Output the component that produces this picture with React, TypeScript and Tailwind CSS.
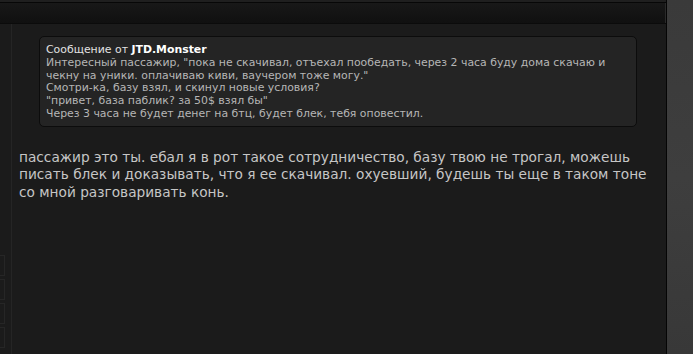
import React from "react";

const QUOTE_LINES = [
  'Интересный пассажир, "пока не скачивал, отъехал пообедать, через 2 часа буду дома скачаю и',
  'чекну на уники. оплачиваю киви, ваучером тоже могу."',
  "Смотри-ка, базу взял, и скинул новые условия?",
  '"привет, база паблик? за 50$ взял бы"',
  "Через 3 часа не будет денег на бтц, будет блек, тебя оповестил.",
];

const POST_LINES = [
  "пассажир это ты. ебал я в рот такое сотрудничество, базу твою не трогал, можешь",
  "писать блек и доказывать, что я ее скачивал. охуевший, будешь ты еще в таком тоне",
  "со мной разговаривать конь.",
];

function SideStubs() {
  return (
    <div className="flex w-[12px] shrink-0 flex-col border-r border-[#252525]">
      <div className="mt-[231px] flex flex-col gap-[3px]">
        {[0, 1, 2, 3].map((i) => (
          <div key={i} className="h-[21px] w-[5px] border-y border-r border-[#262626]" />
        ))}
      </div>
    </div>
  );
}

function Quote() {
  return (
    <div className="ml-[27px] w-[598px] rounded-[5px] border border-[#0c0c0c] bg-[#242424] px-[6px] pb-[5px] pt-[7px] text-[10.9px] leading-[12.8px] text-[#b6b6b6]">
      <div className="text-[#e2e2e2]">
        Сообщение от <b className="font-bold text-white">JTD.Monster</b>
      </div>
      {QUOTE_LINES.map((line) => (
        <div key={line} className="whitespace-nowrap">
          {line}
        </div>
      ))}
    </div>
  );
}

export default function App() {
  return (
    <div
      className="flex h-[354px] w-[693px] overflow-hidden bg-[#3b3b3b]"
      style={{ fontFamily: '"DejaVu Sans", Verdana, sans-serif' }}
    >
      <div className="flex w-[666px] shrink-0 flex-col bg-[#1b1b1b]">
        <div className="h-[2px] bg-[#1f1f1f]" />
        <div className="h-[1px] bg-[#070707]" />
        <div className="h-[20px] border-r border-[#2a2a2a] bg-gradient-to-b from-[#181818] to-[#101010]" />
        <div className="h-[1px] bg-[#0b0b0b]" />
        <div className="flex flex-1">
          <SideStubs />
          <div className="flex-1 pt-[12px]">
            <Quote />
            <div className="mt-[22px] pl-[7px] text-[13.7px] leading-[17.5px] text-[#c6c6c6]">
              {POST_LINES.map((line) => (
                <div key={line} className="whitespace-nowrap">
                  {line}
                </div>
              ))}
            </div>
          </div>
        </div>
      </div>
      <div className="w-[1px] shrink-0 bg-[#050505]" />
      <div className="flex-1 bg-gradient-to-b from-[#3a3a3a] via-[#3e3e3e] to-[#383838]" />
    </div>
  );
}
